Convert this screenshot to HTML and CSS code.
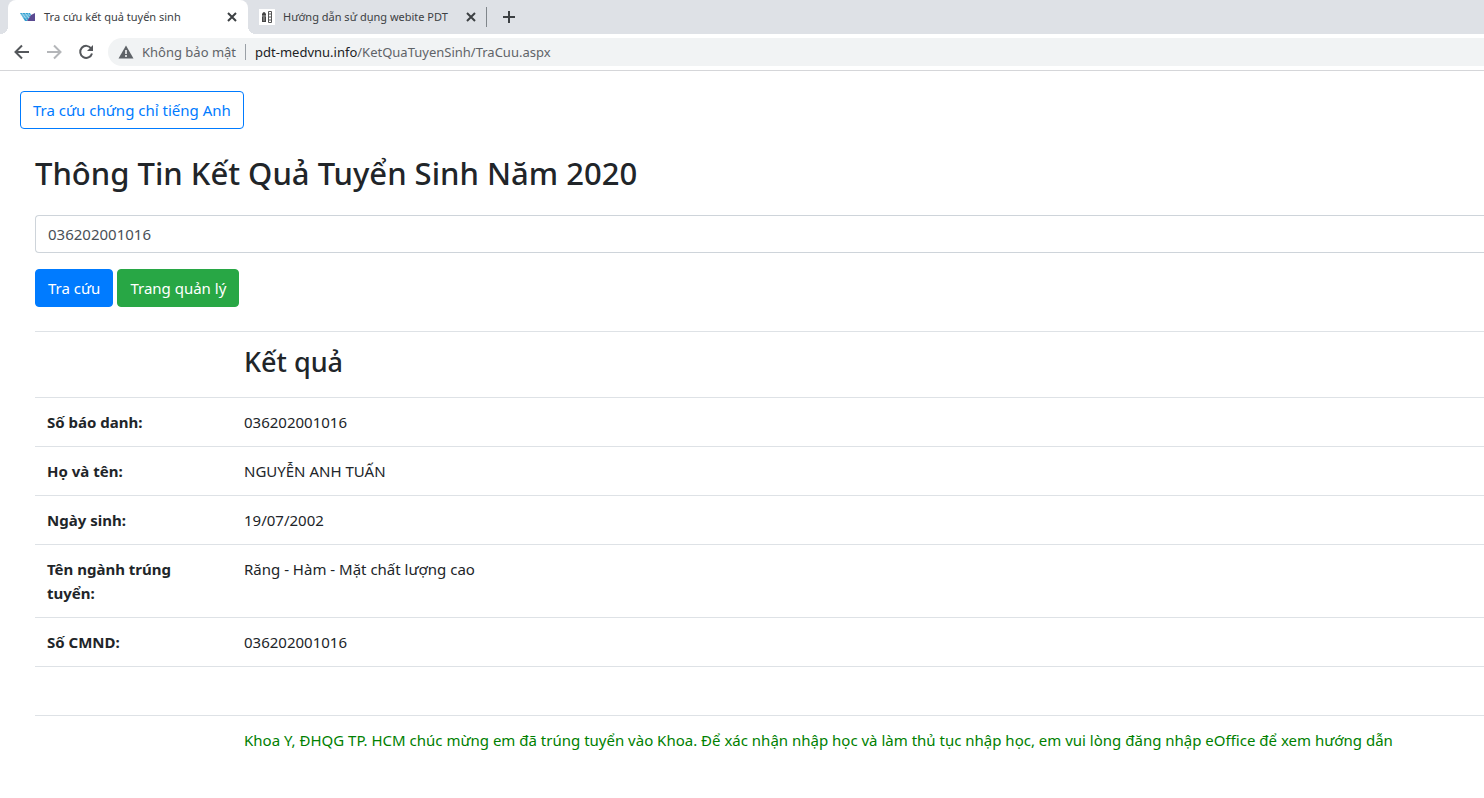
FILE: index.html
```html
<!DOCTYPE html>
<html lang="vi">
<head>
<meta charset="utf-8">
<title>Tra cứu kết quả tuyển sinh</title>
<link rel="stylesheet" href="styles.css">
</head>
<body>
<header class="browser">
  <div class="tabs">
    <div class="tab tab-active">
      <svg class="favicon" viewBox="0 0 16 16" aria-hidden="true">
        <path d="M0 4h10l1 2-4 6H5z" fill="#2f9fd0"/>
        <path d="M2 4l5 7M5 4l4 5M8 4l2 3M0 6h9M2 8h7" stroke="#d5eef8" stroke-width=".6" fill="none"/>
        <path d="M7 12l4-6 4-2v8z" fill="#5a4a91"/>
      </svg>
      <span class="tab-title">Tra cứu kết quả tuyển sinh</span>
      <button class="icon-button tab-close" aria-label="Đóng thẻ"><svg viewBox="0 0 10 10"><path d="M1 1l8 8M9 1l-8 8"/></svg></button>
    </div>
    <div class="tab tab-idle">
      <svg class="favicon" viewBox="0 0 16 16" aria-hidden="true">
        <path d="M0 0h16v16H0z" fill="#fff"/>
        <path d="M3 5q2-4 4 0v8H3z" fill="#444"/>
        <path d="M3 7h4M5 8v4" stroke="#aaa"/>
        <path d="M9.500 2.500h3v11h-3zM10 5h2M10 8h2M10 11h2" fill="none" stroke="#555"/>
      </svg>
      <span class="tab-title">Hướng dẫn sử dụng webite PDT</span>
      <button class="icon-button tab-close" aria-label="Đóng thẻ"><svg viewBox="0 0 10 10"><path d="M1 1l8 8M9 1l-8 8"/></svg></button>
    </div>
    <button class="icon-button tab-new" aria-label="Thẻ mới"><svg viewBox="0 0 12 12"><path d="M6 0v12M0 6h12"/></svg></button>
  </div>
  <nav class="toolbar">
    <button class="icon-button" aria-label="Quay lại"><svg viewBox="0 0 16 16"><path d="M15 8H2M8 1.500L1.500 8 8 14.500"/></svg></button>
    <button class="icon-button is-disabled" aria-label="Tiến" disabled><svg viewBox="0 0 16 16"><path d="M1 8h13M8 1.500L14.500 8 8 14.500"/></svg></button>
    <button class="icon-button" aria-label="Tải lại"><svg viewBox="0 0 16 16"><path d="M13.200 4.500A6 6 0 1 0 14 9.500"/><path class="solid" d="M15 1v6H9z"/></svg></button>
    <div class="address">
      <svg class="warning" viewBox="0 0 16 14" aria-hidden="true"><path d="M8 0.500l7.500 13H.5z" fill="#5f6368"/><path d="M8 5v4M8 10v2" stroke="#fff" stroke-width="1.500"/></svg>
      <span class="security">Không bảo mật</span>
      <span class="url"><span class="host">pdt-medvnu.info</span>/KetQuaTuyenSinh/TraCuu.aspx</span>
    </div>
  </nav>
</header>
<main class="page">
  <a class="button button-outline" href="#">Tra cứu chứng chỉ tiếng Anh</a>
  <section class="content">
    <h1>Thông Tin Kết Quả Tuyển Sinh Năm 2020</h1>
    <form class="search">
      <input class="field" type="text" value="036202001016" aria-label="Số báo danh hoặc CMND">
      <div class="actions">
        <button class="button button-primary" type="button">Tra cứu</button>
        <button class="button button-success" type="button">Trang quản lý</button>
      </div>
    </form>
    <table class="result">
      <tr><td class="label"></td><td><h2>Kết quả</h2></td></tr>
      <tr><th class="label" scope="row">Số báo danh:</th><td>036202001016</td></tr>
      <tr><th class="label" scope="row">Họ và tên:</th><td>NGUYỄN ANH TUẤN</td></tr>
      <tr><th class="label" scope="row">Ngày sinh:</th><td>19/07/2002</td></tr>
      <tr><th class="label" scope="row">Tên ngành trúng tuyển:</th><td>Răng - Hàm - Mặt chất lượng cao</td></tr>
      <tr><th class="label" scope="row">Số CMND:</th><td>036202001016</td></tr>
      <tr class="spacer"><td class="label"></td><td></td></tr>
      <tr><td class="label"></td><td class="message">Khoa Y, ĐHQG TP. HCM chúc mừng em đã trúng tuyển vào Khoa. Để xác nhận nhập học và làm thủ tục nhập học, em vui lòng đăng nhập eOffice để xem hướng dẫn</td></tr>
    </table>
  </section>
</main>
</body>
</html>
```
FILE: styles.css
```css
* { box-sizing: border-box; }
body {
  margin: 0;
  background: #fff;
  color: #212529;
  font: 15px/24px "Noto Sans", "Open Sans", sans-serif;
}
button, input { font: inherit; }

.browser { border-bottom: 1px solid #d5d6d9; font-size: 13px; }
.tabs { display: flex; height: 34px; padding-left: 8px; background: #dee1e6; }
.tab {
  display: flex;
  align-items: center;
  position: relative;
  width: 239px;
  padding: 0 10px 0 11px;
  color: #3c4043;
  font-size: 11px;
}
.tab-active { width: 240px; padding-left: 12px; background: #fff; border-radius: 8px 8px 0 0; }
.tab-active::before,
.tab-active::after {
  content: "";
  position: absolute;
  bottom: 0;
  width: 8px;
  height: 8px;
}
.tab-active::before { right: 100%; background: radial-gradient(circle at 0 0, #dee1e6 8px, #fff 8px); }
.tab-active::after { left: 100%; background: radial-gradient(circle at 100% 0, #dee1e6 8px, #fff 8px); }
.tab-idle::after {
  content: "";
  width: 1px;
  height: 20px;
  background: #80868b;
  position: absolute;
  right: 0;
}
.favicon { width: 16px; height: 16px; margin-right: 8px; flex: none; }
.tab-title { flex: 1; white-space: nowrap; }
.icon-button {
  display: flex;
  align-items: center;
  justify-content: center;
  flex: none;
  width: 32px;
  height: 32px;
  padding: 0;
  border: 0;
  background: none;
  color: #54575b;
}
.icon-button svg { width: 16px; height: 16px; fill: none; stroke: currentColor; stroke-width: 2; }
.icon-button .solid { fill: currentColor; stroke: none; }
.tab-close { width: 12px; height: 16px; color: #3c4043; }
.icon-button.tab-close svg { width: 10px; height: 10px; }
.tab-new { width: 44px; height: 34px; color: #3c4043; }
.icon-button.tab-new svg { width: 12px; height: 12px; }
.is-disabled { color: #b4b6b9; }

.toolbar { display: flex; align-items: center; height: 36px; padding-left: 6px; }
.address {
  display: flex;
  align-items: center;
  flex: 1;
  height: 28px;
  margin-left: 6px;
  padding-left: 10px;
  border-radius: 14px 0 0 14px;
  background: #f1f3f4;
  color: #5f6368;
}
.warning { width: 16px; height: 14px; margin-right: 8px; }
.security { padding-right: 9px; border-right: 1px solid #9aa0a6; line-height: 16px; }
.url { padding-left: 9px; }
.host { color: #202124; }

.page { padding: 20px 0 20px 20px; }
.button {
  display: inline-block;
  padding: 6px 12px;
  border: 1px solid;
  border-radius: 4px;
  line-height: 24px;
  text-decoration: none;
}
.button-outline { border-color: #007bff; color: #007bff; }
.button-primary { border-color: #007bff; background: #007bff; color: #fff; }
.button-success { border-color: #28a745; background: #28a745; color: #fff; }

.content { padding: 24px 0 0 15px; }
h1 { margin: 0 0 22px; font-size: 31px; line-height: 40px; font-weight: 500; }
h2 { margin: 0 0 6px; font-size: 27px; line-height: 35px; font-weight: 500; }
.field {
  display: block;
  width: 100%;
  height: 38px;
  padding: 6px 12px;
  border: 1px solid #ced4da;
  border-right: 0;
  border-radius: 4px 0 0 4px;
  color: #495057;
}
.actions { display: flex; gap: 4px; margin: 16px 0 24px; }
.result { width: 100%; border-collapse: collapse; table-layout: fixed; }
.result th, .result td {
  padding: 12px;
  border-top: 1px solid #dee2e6;
  text-align: left;
  vertical-align: top;
}
.result .label { width: 197px; }
.result th { font-weight: 700; }
.spacer { height: 49px; }
.result .message { color: #008000; }
```
